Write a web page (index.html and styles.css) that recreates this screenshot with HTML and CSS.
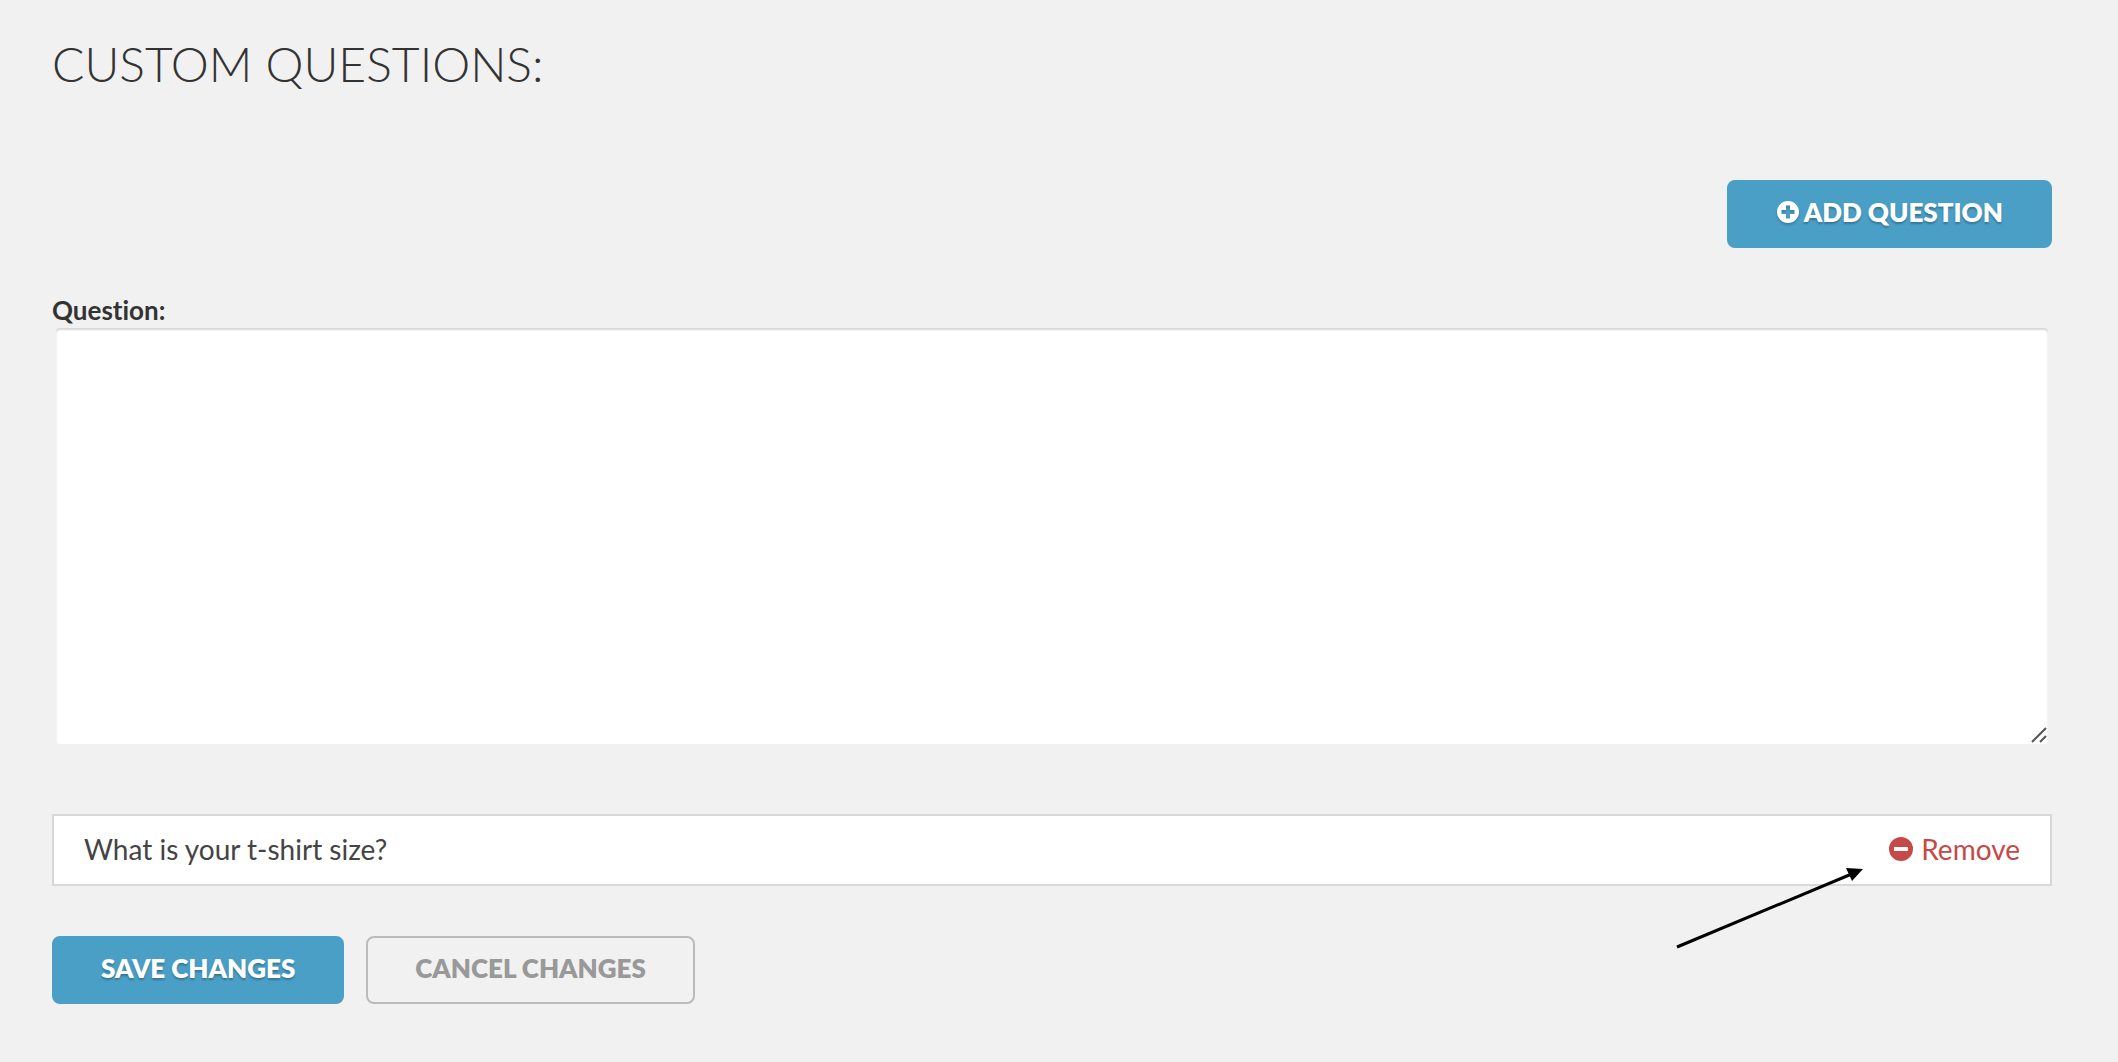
FILE: index.html
```html
<!DOCTYPE html>
<html lang="en">
  <head>
    <meta charset="UTF-8" />
    <meta name="viewport" content="width=device-width, initial-scale=1.0" />
    <title>Custom Questions</title>
    <link rel="stylesheet" href="styles.css">
  </head>
  <body>
    <form class="questions">
      <h1 class="title">CUSTOM QUESTIONS:</h1>

      <div class="toolbar">
        <button type="button" class="btn btn-primary">
          <svg class="plus-icon" viewBox="0 0 24 24" aria-hidden="true">
            <path fill-rule="evenodd" d="M12 1a11 11 0 1 0 0 22a11 11 0 1 0 0-22zM10 5.500h4v4.500h4.500v4h-4.500v4.500h-4v-4.500h-4.500v-4h4.500z" />
          </svg>
          ADD QUESTION
        </button>
      </div>

      <label class="question-label" for="question">Question:</label>
      <div class="question-field">
        <textarea id="question" class="question-input"></textarea>
        <svg class="resize-grip" viewBox="0 0 16 16" aria-hidden="true">
          <path d="M1 15L15 1M9 15L15 9" />
        </svg>
      </div>

      <div class="question-row">
        <span>What is your t-shirt size?</span>
        <a href="#" class="remove">
          <svg class="remove-icon" viewBox="0 0 24 24" aria-hidden="true">
            <path fill-rule="evenodd" d="M12 0a12 12 0 1 0 0 24a12 12 0 1 0 0-24zM5 10h14v4h-14z" />
          </svg>
          Remove
        </a>
        <svg class="arrow" viewBox="0 0 200 96" aria-hidden="true">
          <path class="arrow-line" d="M7 87L184 13" />
          <path d="M193 9L176 8L182 21z" />
        </svg>
      </div>

      <div class="actions">
        <button type="submit" class="btn btn-primary">SAVE CHANGES</button>
        <button type="button" class="btn btn-outline">CANCEL CHANGES</button>
      </div>
    </form>
  </body>
</html>
```
FILE: styles.css
```css
* {
  box-sizing: border-box;
}

body {
  margin: 0;
  background-color: #f1f1f1;
  color: #333;
  font-family: Lato, "Liberation Sans", sans-serif;
  font-size: 28px;
  font-variant-ligatures: none;
  line-height: 36px;
}

.questions {
  padding: 36px 66px 58px 52px;
}

.title {
  margin: 0 0 88px;
  font-size: 48px;
  font-weight: 300;
  line-height: 56px;
}

.toolbar {
  display: flex;
  justify-content: flex-end;
  margin-bottom: 44px;
}

.btn {
  display: flex;
  align-items: center;
  gap: 4px;
  height: 68px;
  padding: 0 47px 4px;
  border: 2px solid transparent;
  border-radius: 8px;
  font-family: inherit;
  font-size: 26px;
  font-weight: 800;
  line-height: 36px;
  cursor: pointer;
}

.btn-primary {
  background-color: #4a9fc6;
  border-color: #4a9fc6;
  color: #fff;
  text-shadow: 0 2px 2px rgba(0, 0, 0, 0.25);
}

.btn-outline {
  background-color: transparent;
  border-color: #bbb;
  color: #999;
}

.plus-icon {
  width: 24px;
  height: 24px;
  fill: currentColor;
  filter: drop-shadow(0 2px 1px rgba(0, 0, 0, 0.2));
}

.question-label {
  display: block;
  font-size: 26px;
  font-weight: 700;
}

.question-field {
  position: relative;
  padding: 0 4px;
}

.question-input {
  display: block;
  width: 100%;
  height: 416px;
  padding: 12px;
  border: 0;
  border-radius: 4px;
  background-color: #fff;
  box-shadow: inset 0 2px 2px rgba(0, 0, 0, 0.16);
  font: inherit;
  resize: vertical;
}

.question-input::-webkit-resizer {
  background-color: transparent;
}

.resize-grip {
  position: absolute;
  right: 5px;
  bottom: 1px;
  width: 16px;
  height: 16px;
  fill: none;
  stroke: #555;
  stroke-width: 2;
  pointer-events: none;
}

.question-row {
  position: relative;
  display: flex;
  align-items: center;
  justify-content: space-between;
  margin: 70px 0 50px;
  padding: 15px 30px 17px;
  border: 2px solid #d8d8d8;
  background-color: #fff;
  color: #444;
}

.remove {
  display: flex;
  align-items: center;
  gap: 8px;
  color: #c64947;
  text-decoration: none;
}

.remove-icon {
  width: 24px;
  height: 24px;
  fill: currentColor;
}

/* pointer to the remove link */
.arrow {
  position: absolute;
  top: 44px;
  right: 180px;
  width: 200px;
  height: 96px;
}

.arrow-line {
  fill: none;
  stroke: #000;
  stroke-width: 3;
}

.actions {
  display: flex;
  gap: 22px;
}
```
